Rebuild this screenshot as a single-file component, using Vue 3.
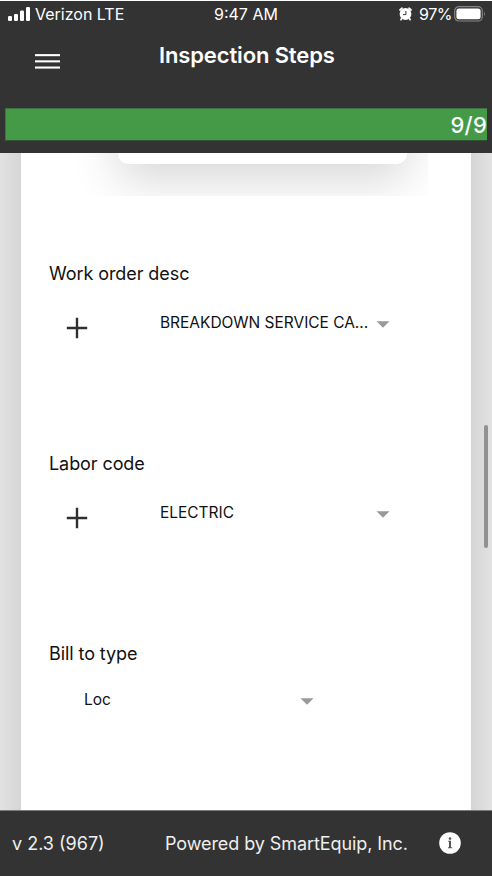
<script setup>
const fields = [
  { label: 'Work order desc', value: 'BREAKDOWN SERVICE CA...', add: true, cls: 'work' },
  { label: 'Labor code', value: 'ELECTRIC', add: true, cls: 'labor' },
  { label: 'Bill to type', value: 'Loc', add: false, cls: 'bill' },
]
</script>

<template>
  <div class="screen">
    <header class="top">
      <div class="status">
        <div class="carrier">
          <svg class="signal" width="23" height="14" viewBox="0 0 23 14" fill="#fff">
            <rect x="0" y="9" width="4" height="5" rx="1.2" />
            <rect x="6" y="7" width="4" height="7" rx="1.2" />
            <rect x="12" y="3.5" width="4" height="10.5" rx="1.2" />
            <rect x="18" y="0" width="4" height="14" rx="1.2" />
          </svg>
          <span class="network">Verizon LTE</span>
        </div>
        <span class="clock">9:47 AM</span>
        <div class="power">
          <svg class="alarm" width="13" height="14" viewBox="0 0 13 14">
            <circle cx="6.5" cy="7" r="5.9" fill="#fff" />
            <path d="M3 10.5L2 12.6M10 10.5L11 12.6" stroke="#fff" stroke-width="1.8" stroke-linecap="round" />
            <path d="M1 3L3 1.2M12 3L10 1.2" stroke="#fff" stroke-width="1.7" stroke-linecap="round" />
            <path d="M6.9 4V7.6H4" stroke="#333" stroke-width="1" fill="none" />
          </svg>
          <span class="percent">97%</span>
          <svg class="battery" width="32" height="16" viewBox="0 0 32 16">
            <rect x=".7" y=".7" width="27.6" height="14.3" rx="4.2" fill="none" stroke="#858585" stroke-width="1.2" />
            <rect x="2.4" y="2.4" width="24.2" height="10.9" rx="2.5" fill="#fff" />
            <path d="M30 5.3Q31.8 7.8 30 10.3Z" fill="#858585" />
          </svg>
        </div>
      </div>
      <div class="nav">
        <svg class="menu" width="25" height="17" viewBox="0 0 25 17" fill="#fff">
          <rect y="1.1" width="25" height="2.1" />
          <rect y="7.3" width="25" height="2.1" />
          <rect y="13.5" width="25" height="2.1" />
        </svg>
        <h1><span class="title">Inspection Steps</span></h1>
      </div>
      <div class="progress"><span class="count">9/9</span></div>
    </header>

    <main class="body">
      <section class="panel">
        <div class="previous"><div class="card"></div></div>
        <div v-for="f in fields" :key="f.label" class="field" :class="f.cls">
          <div class="label"><span>{{ f.label }}</span></div>
          <div class="row">
            <svg v-if="f.add" class="plus" width="22" height="22" viewBox="0 0 22 22">
              <path d="M11 .8V21.2M.8 11H21.2" stroke="#2f2f2f" stroke-width="2.4" />
            </svg>
            <div class="select">
              <span class="value">{{ f.value }}</span>
              <svg class="caret" width="14" height="7" viewBox="0 0 14 7"><path d="M.5 .3H13.5L7 6.7Z" fill="#999" /></svg>
            </div>
          </div>
        </div>
      </section>
      <div class="thumb"></div>
    </main>

    <footer class="bottom">
      <span class="version">v 2.3 (967)</span>
      <span class="powered">Powered by SmartEquip, Inc.</span>
      <svg class="info" width="22" height="22" viewBox="0 0 22 22">
        <circle cx="11" cy="11" r="10.8" fill="#fff" />
        <path d="M9.2 8.8H12V15.2H13.1V16.2H9V15.2H10V9.8H9.2Z" fill="#555" />
        <circle cx="11" cy="6.6" r="1.3" fill="#555" />
      </svg>
    </footer>
  </div>
</template>

<style>
body { margin: 0; background: #fff; }
</style>

<style scoped>
.screen {
  width: 492px;
  height: 876px;
  display: flex;
  flex-direction: column;
  box-sizing: border-box;
  padding-top: 1px;
  overflow: hidden;
  font-family: Inter, "Liberation Sans", sans-serif;
  color: #111;
}
span { white-space: nowrap; }
.top {
  height: 152px;
  flex: none;
  box-sizing: border-box;
  background: #333;
  color: #fff;
}
.status {
  height: 26px;
  padding-bottom: 1px;
  display: grid;
  grid-template-columns: 214px 1fr 93px;
  align-items: center;
  font-size: 16px;
  line-height: 26px;
}
.carrier, .power { display: flex; align-items: center; }
.carrier { padding-left: 8px; }
.network { margin-left: 4px; }
.percent { margin-left: 7px; width: 35px; letter-spacing: -.4px; }
.nav { display: flex; height: 80px; }
.menu { margin: 25px 0 0 35px; }
h1 {
  margin: 13px 0 0 99px;
  font-size: 22px;
  font-weight: 600;
  line-height: 28px;
  letter-spacing: -.13px;
}
.progress {
  height: 33px;
  margin: 0 5px;
  background: #459a47;
  box-sizing: border-box;
  border: 1px solid #3f733f;
  border-bottom-color: #355036;
  border-right: 0;
  display: flex;
  justify-content: flex-end;
  font-size: 22px;
  font-weight: 500;
  line-height: 32px;
}
.count { letter-spacing: .2px; }
.body {
  height: 657px;
  flex: none;
  display: flex;
  background: linear-gradient(90deg, #e2e2e2 0, #d5d5d5 21px, #d5d5d5 471px, #e2e2e2 492px);
}
.panel { width: 450px; margin-left: 21px; background: #fff; }
.previous { height: 43px; width: 407px; overflow: hidden; }
.card {
  height: 100px;
  width: 289px;
  margin: -89px 0 0 97px;
  border-radius: 10px;
  background: #fff;
  box-shadow: 0 16px 48px rgba(0, 0, 0, .16);
}
.field { height: 190px; }
.work { margin-top: 65px; }
.label { padding-left: 28px; font-size: 18px; line-height: 26px; letter-spacing: -.08px; }
.row { display: flex; }
.plus { margin: 30px 0 0 45px; flex: none; }
.select { display: flex; align-items: center; height: 24px; width: 230px; margin: 23px 0 0 72px; }
.bill .select { margin: 20px 0 0 63px; }
.value { font-size: 15.5px; flex: 1; letter-spacing: -.03px; }
.caret { flex: none; margin-top: 4px; }
.thumb { width: 4px; height: 123px; border-radius: 2px; background: #919191; margin: 272px 0 0 13px; }
.bottom {
  height: 66px;
  flex: none;
  display: flex;
  background: #333;
  color: #eee;
  font-size: 18px;
  line-height: 26px;
  padding-top: 20px;
  box-sizing: border-box;
  border-top: 1px solid #7b7b7b;
}
.version { width: 153px; margin-left: 12px; }
.powered { width: 274px; letter-spacing: -.08px; }
.info { margin-top: 1px; }
</style>
